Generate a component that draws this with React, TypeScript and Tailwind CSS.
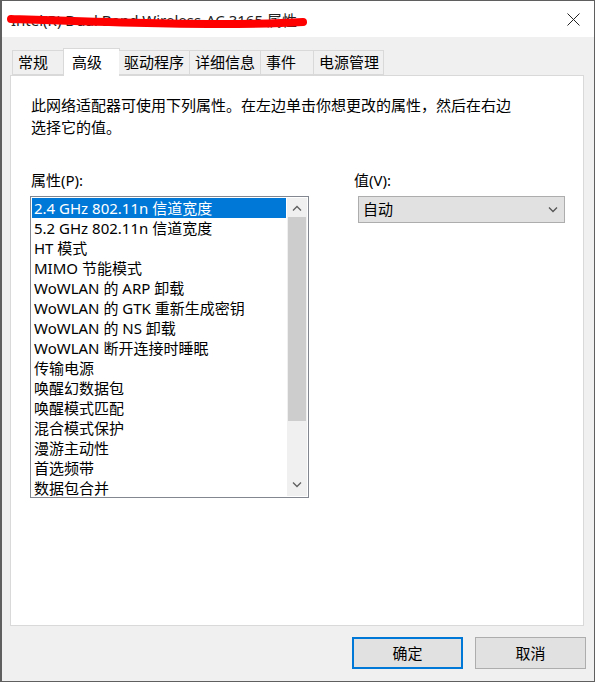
import React from 'react';

const FONT = '"Noto Sans", "Noto Sans CJK SC", sans-serif';

const tabs = [
  { label: '常规', w: 'w-[52px]' },
  { label: '高级', w: 'w-[57px]', active: true },
  { label: '驱动程序', w: 'w-[71px]' },
  { label: '详细信息', w: 'w-[71px]' },
  { label: '事件', w: 'w-[53px]' },
  { label: '电源管理', w: 'w-[70px]' },
];

const properties = [
  '2.4 GHz 802.11n 信道宽度',
  '5.2 GHz 802.11n 信道宽度',
  'HT 模式',
  'MIMO 节能模式',
  'WoWLAN 的 ARP 卸载',
  'WoWLAN 的 GTK 重新生成密钥',
  'WoWLAN 的 NS 卸载',
  'WoWLAN 断开连接时睡眠',
  '传输电源',
  '唤醒幻数据包',
  '唤醒模式匹配',
  '混合模式保护',
  '漫游主动性',
  '首选频带',
  '数据包合并',
];

const Chevron = ({ up, className }: { up?: boolean; className?: string }) => (
  <svg width="10" height="6" viewBox="0 0 10 6" className={className}>
    <path
      d={up ? 'M1 5.5 L5 1.5 L9 5.5' : 'M1 0.5 L5 4.5 L9 0.5'}
      fill="none"
      stroke="currentColor"
      strokeWidth="1.3"
    />
  </svg>
);

export default function App() {
  const [selected, setSelected] = React.useState(0);

  return (
    <div
      className="w-[595px] h-[682px] flex flex-col bg-[#f0f0f0] border border-[#5f5f5f] border-l-2 text-[15px] text-black overflow-hidden"
      style={{ fontFamily: FONT }}
    >
      {/* Title bar */}
      <div className="relative h-[36px] bg-white flex items-center shrink-0">
        <span className="pl-[9px] pt-[3px] text-[#222] leading-none">Intel(R) Dual Band Wireless-AC 3165 属性</span>
        {/* redaction stroke */}
        <svg className="absolute left-[5px] top-[11px]" width="300" height="20" viewBox="0 0 300 20">
          <path
            d="M4 7 C 60 9, 140 12, 210 12 C 250 12, 280 11, 296 10"
            fill="none"
            stroke="#ff0000"
            strokeWidth="8"
            strokeLinecap="round"
          />
        </svg>
        <svg className="absolute right-[14px] top-[12px]" width="13" height="13" viewBox="0 0 13 13">
          <path d="M0.5 0.5 L12.5 12.5 M12.5 0.5 L0.5 12.5" stroke="#222" strokeWidth="1" />
        </svg>
      </div>

      {/* Body */}
      <div className="flex-1 flex flex-col pl-[8px] pr-[10px] pt-[11px]">
        {/* Tabs */}
        <div className="flex items-end h-[28px] pl-[2px] relative z-10">
          {tabs.map((t) =>
            t.active ? (
              <div
                key={t.label}
                className={`${t.w} h-[28px] -mx-[1px] bg-white border border-b-0 border-[#d9d9d9] flex items-center pl-[8px] pb-[1px]`}
              >
                {t.label}
              </div>
            ) : (
              <div
                key={t.label}
                className={`${t.w} h-[25px] bg-[#f0f0f0] border border-[#d9d9d9] border-l-0 first:border-l flex items-center pl-[5px] mb-[1px]`}
              >
                {t.label}
              </div>
            )
          )}
        </div>

        {/* Panel */}
        <div className="h-[551px] -mt-[1px] bg-white border border-[#d9d9d9] pl-[19px] pr-[17px] pt-[18px]">
          <p className="leading-[22px] pl-[1px]">
            此网络适配器可使用下列属性。在左边单击你想更改的属性，然后在右边
            <br />
            选择它的值。
          </p>

          <div className="flex mt-[32px]">
            {/* Properties list */}
            <div className="w-[279px] shrink-0">
              <div className="leading-[20px] pl-[1px]">属性(P):</div>
              <div className="mt-[6px] h-[302px] border border-[#828790] p-[1px] flex">
                <div className="flex-1 flex flex-col">
                  {properties.map((p, i) => (
                    <div
                      key={p}
                      onClick={() => setSelected(i)}
                      className={`h-[20px] leading-[20px] pl-[2px] whitespace-nowrap ${
                        selected === i ? 'bg-[#0078d7] text-white' : ''
                      }`}
                    >
                      {p}
                    </div>
                  ))}
                </div>
                <div className="w-[20px] ml-[1px] bg-[#f0f0f0] flex flex-col">
                  <div className="h-[19px] flex items-center justify-center text-[#606060]">
                    <Chevron up />
                  </div>
                  <div className="h-[204px] mx-[1px] bg-[#cdcdcd]" />
                  <div className="flex-1" />
                  <div className="h-[19px] flex items-center justify-center text-[#606060] mb-[2px]">
                    <Chevron />
                  </div>
                </div>
              </div>
            </div>

            {/* Value */}
            <div className="ml-[45px] flex flex-col">
              <div className="leading-[20px]">值(V):</div>
              <div className="mt-[6px] ml-[4px] w-[207px] h-[27px] bg-[#e1e1e1] border border-[#adadad] flex items-center justify-between pl-[4px] pr-[6px]">
                <span>自动</span>
                <Chevron className="text-[#555]" />
              </div>
            </div>
          </div>
        </div>

        {/* Buttons */}
        <div className="flex justify-end gap-[12px] mt-[11px] -mr-[2px]">
          <button className="w-[111px] h-[32px] bg-[#e1e1e1] border-2 border-[#0078d7] flex items-center justify-center">
            确定
          </button>
          <button className="w-[111px] h-[32px] bg-[#e1e1e1] border border-[#adadad] flex items-center justify-center">
            取消
          </button>
        </div>
      </div>
    </div>
  );
}
